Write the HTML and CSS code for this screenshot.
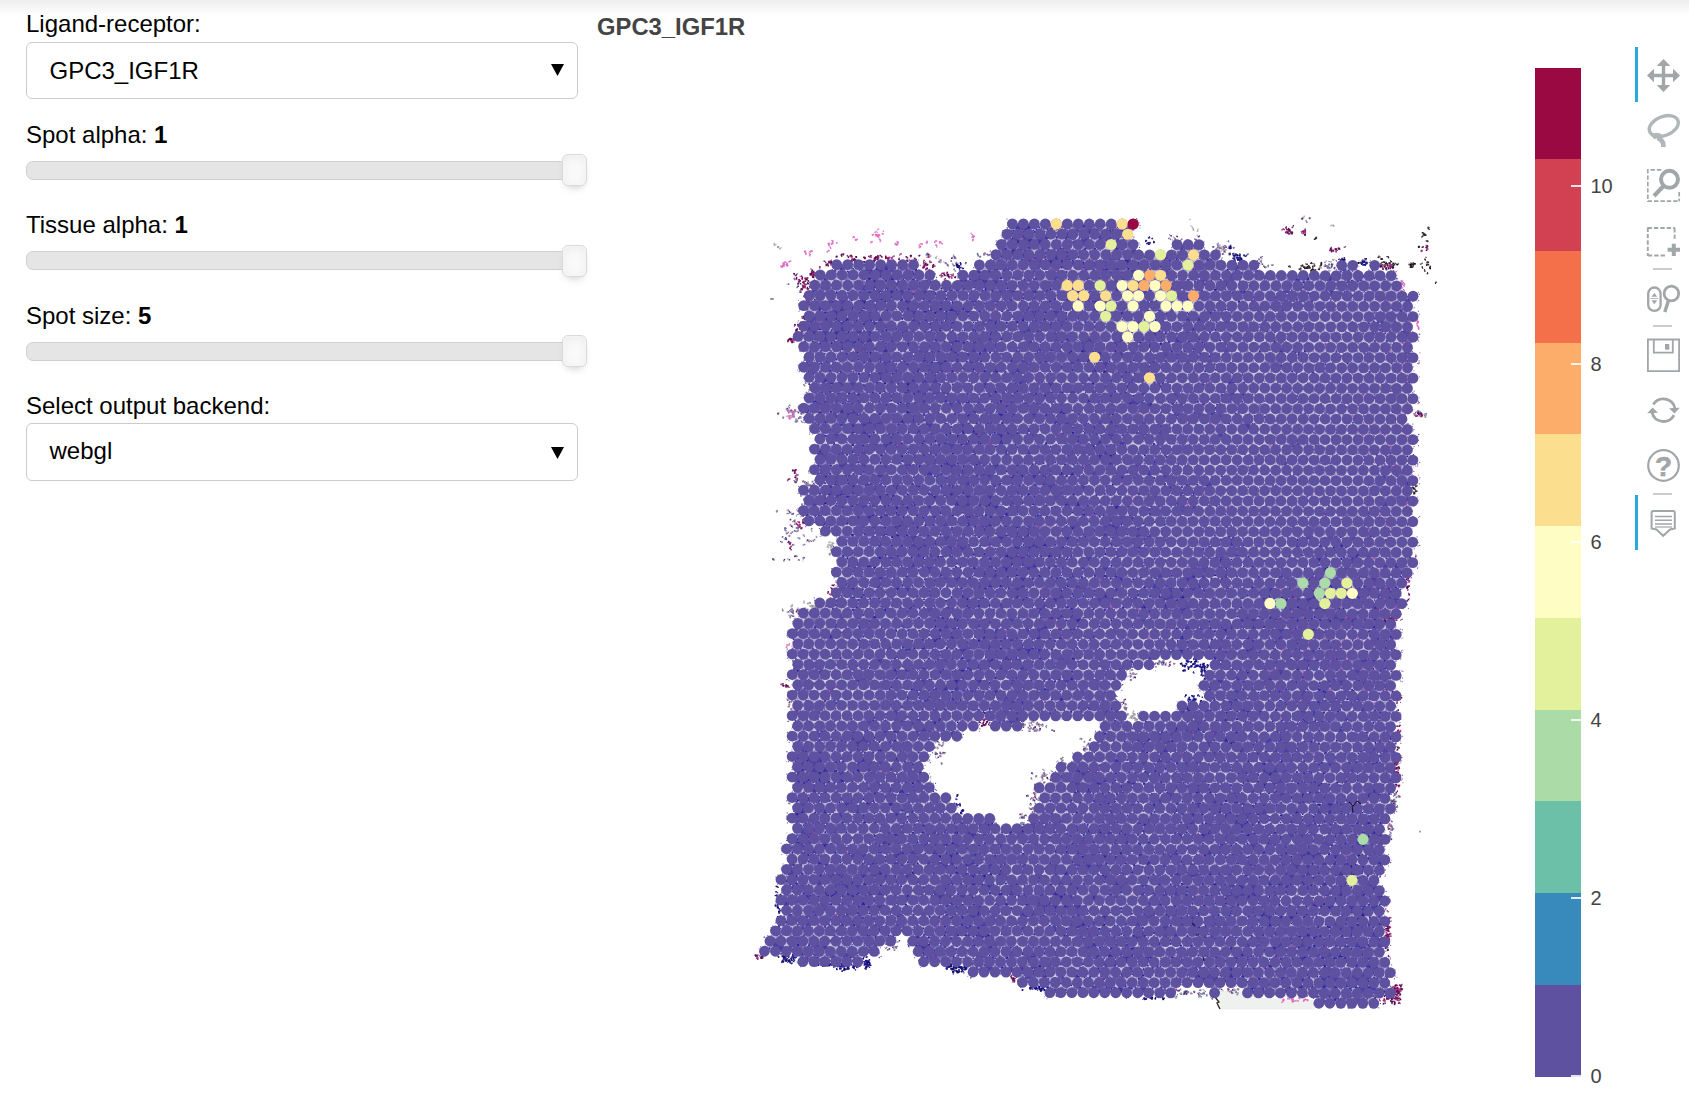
FILE: index.html
```html
<!DOCTYPE html>
<html lang="en">
<head>
<meta charset="utf-8">
<title>GPC3_IGF1R</title>
<link rel="stylesheet" href="styles.css">
</head>
<body>
<main class="app">
  <section class="controls">
    <div class="field">
      <div class="label">Ligand-receptor:</div>
      <div class="select" role="combobox"><span>GPC3_IGF1R</span><svg class="arrow" viewBox="0 0 13 12"><path d="M0 0H13L6.5 12Z"/></svg></div>
    </div>
    <div class="slider">
      <div class="label">Spot alpha: <b>1</b></div>
      <div class="track"><div class="handle"></div></div>
    </div>
    <div class="slider">
      <div class="label">Tissue alpha: <b>1</b></div>
      <div class="track"><div class="handle"></div></div>
    </div>
    <div class="slider">
      <div class="label">Spot size: <b>5</b></div>
      <div class="track"><div class="handle"></div></div>
    </div>
    <div class="field backend">
      <div class="label">Select output backend:</div>
      <div class="select" role="combobox"><span>webgl</span><svg class="arrow" viewBox="0 0 13 12"><path d="M0 0H13L6.5 12Z"/></svg></div>
    </div>
  </section>

  <section class="figure">
    <h1 class="title">GPC3_IGF1R</h1>
    <canvas id="plot" class="plot" width="720" height="830"></canvas>
  </section>

  <section class="colorbar">
    <div class="ramp">
      <i class="c10"></i><i class="c9"></i><i class="c8"></i><i class="c7"></i><i class="c6"></i><i class="c5"></i><i class="c4"></i><i class="c3"></i><i class="c2"></i><i class="c1"></i><i class="c0"></i>
    </div>
    <div class="ticks">
      <span>10</span><span>8</span><span>6</span><span>4</span><span>2</span><span>0</span>
    </div>
  </section>

  <nav class="toolbar">
    <div class="tool active"><svg viewBox="0 0 33 33"><path class="fill" d="M16.5 0L23.3 7H18.2V14.8H26V9.7L33 16.5L26 23.3V18.2H18.2V26H23.3L16.5 33L9.7 26H14.8V18.2H7V23.3L0 16.5L7 9.7V14.8H14.8V7H9.7Z"/></svg></div>
    <div class="tool"><svg viewBox="0 0 33 33"><g class="soft"><ellipse cx="16.8" cy="12" rx="15.2" ry="9.4" transform="rotate(-22 16.8 12)" stroke-width="3.4"/><path d="M5.5 23.2Q10 19.6 15 23.8" stroke-width="5.5"/><path d="M10.5 24Q16.8 26 16.5 33" stroke-width="4.6"/></g></svg></div>
    <div class="tool"><svg viewBox="0 0 33 33"><path d="M.8 0V32.2H33" stroke-width="1.7" stroke-dasharray="4.4 2"/><path d="M3.5 .9H15M32.2 23V32" stroke-width="1.7" stroke-dasharray="4.4 2"/><circle cx="22.5" cy="10.3" r="8.5" stroke-width="4"/><path d="M17 16.5L7 27" stroke-width="4.2"/></svg></div>
    <div class="tool"><svg viewBox="0 0 33 33"><path d="M.8 2.5V31M.8 30.5H18M.5 3H28M27.6 3V15" stroke-width="1.9" stroke-dasharray="4.4 2"/><path d="M26.8 18.8V31M20.6 24.8H33" stroke-width="4"/></svg></div>
    <hr>
    <div class="tool"><svg viewBox="0 0 33 33"><rect x="1.2" y="5.5" width="12.4" height="23.4" rx="6.2" stroke-width="2.3"/><path class="fill" d="M7.4 11L10.3 14.8H4.5ZM7.4 22.2L10.3 18.2H4.5Z"/><path d="M3.5 16.5H11.3" stroke-width=".8"/><circle cx="24.4" cy="11.5" r="7.3" stroke-width="2.8"/><path d="M21.5 18.5L17.8 30" stroke-width="3.5"/></svg></div>
    <hr>
    <div class="tool"><svg viewBox="0 0 33 33"><path d="M.9 .5H32.1V32.2H.9ZM6.8 1V13.6H25.8V1" stroke-width="1.8"/><path class="fill" d="M18 5H22.3V10.7H18Z"/></svg></div>
    <div class="tool"><svg viewBox="0 0 33 33"><path d="M6.3 10.4A11.9 11.9 0 0 1 28 14.5M27 21.2A11.9 11.9 0 0 1 5 18.5" stroke-width="2.8"/><path class="fill" d="M32.8 13.7L27.5 19.5L22 14.3ZM.2 19.3L5.5 13.5L11 18.7Z"/></svg></div>
    <div class="tool"><svg viewBox="0 0 33 33"><circle cx="16.5" cy="16.5" r="15.3" stroke-width="2.2"/><text x="16.5" y="26.5" text-anchor="middle">?</text></svg></div>
    <hr>
    <div class="tool active"><svg viewBox="0 0 33 33"><path d="M6.2 4H26Q27.8 4 27.8 6V21.5L23 22.5L16.2 28.8L9.5 22.5L4.6 21.5V6Q4.6 4 6.2 4Z" stroke-width="2"/><path d="M8 9.5H25M8 13.3H25M8 17H25" stroke-width="1.5"/><path d="M8 20H25" stroke-width="1.2"/></svg></div>
  </nav>
</main>
<script src="plot.js"></script>
</body>
</html>
```
FILE: styles.css
```css
* { box-sizing: border-box; }
body {
  margin: 0;
  background: #fff linear-gradient(#ededed, #fff) 0 0 / 100% 15px no-repeat;
  font-family: "Liberation Sans", Helvetica, Arial, sans-serif;
  font-size: 24px;
  line-height: 28px;
  color: #000;
}
.app { display: flex; height: 1106px; overflow: hidden; }

.controls { width: 597px; padding: 10px 0 0 26px; flex: none; }
.label { height: 28px; white-space: nowrap; }
.select {
  margin-top: 4px;
  width: 552px;
  height: 57px;
  border: 1.5px solid #ccc;
  border-radius: 6px;
  padding: 0 13.5px 0 22.5px;
  display: flex;
  align-items: center;
  justify-content: space-between;
  background: #fff;
}
.arrow { width: 13px; height: 12px; margin-top: -2px; }
.slider { height: 90.4px; position: relative; top: .6px; }
.field { height: 110.4px; }
.track {
  margin-top: 12px;
  width: 551px;
  height: 19px;
  border: 1.5px solid #d0d0d0;
  border-radius: 7px;
  background: #e5e5e5;
  display: flex;
  align-items: center;
  justify-content: flex-end;
}
.handle {
  flex: none;
  width: 25px;
  height: 32px;
  margin-right: -11px;
  border: 1.5px solid #d9d9d9;
  border-radius: 6px;
  background: #fafafa;
  box-shadow: inset 0 0 2px #fff, inset 0 2px 12px #ebebeb, 0 5px 10px -5px #bbb;
}
.backend .select { margin-top: 3px; height: 58.5px; padding-bottom: 1px; }
.backend .arrow { margin-top: 3px; }

.figure { width: 938px; flex: none; }
.title {
  margin: 13px 0 0;
  height: 28px;
  font-size: 23.8px;
  line-height: 28px;
  color: #444;
}
.plot { display: block; margin: 159px 0 0 143px; }

.colorbar { width: 100px; padding-top: 67.5px; flex: none; display: flex; }
.ramp { width: 46px; height: 1009px; display: flex; flex-direction: column; }
.ramp i { flex: 1; }
.c0 { background: #5e519f; }
.c1 { background: #3889bc; }
.c2 { background: #6cc0a7; }
.c3 { background: #abdba6; }
.c4 { background: #e4f19c; }
.c5 { background: #fefec4; }
.c6 { background: #fcde8f; }
.c7 { background: #fbad69; }
.c8 { background: #f3704b; }
.c9 { background: #d24151; }
.c10 { background: #9b0942; }
.ticks {
  margin: 107px 0 0 -10px;
  display: flex;
  flex-direction: column;
  font-size: 20px;
  line-height: 22px;
  color: #444;
}
.ticks span { flex: none; height: 178.1px; display: flex; align-items: flex-start; gap: 9.5px; }
.ticks span:last-child { height: 22px; }
.ticks span::before { content: ""; width: 10px; height: 2px; margin-top: 10px; background: #fff; opacity: .85; }

.toolbar { width: 54px; padding-top: 47px; flex: none; }
.tool { height: 55.2px; padding: 2px 0 0 9px; border-left: 3px solid transparent; display: flex; align-items: center; }
.tool.active { border-left-color: #26aae1; }
.tool svg { width: 33px; height: 33px; fill: none; stroke: #a1a6a9; display: block; overflow: visible; }
.tool .fill { fill: #a1a6a9; stroke: none; }
.tool .soft { stroke: #b1b7b9; }
.tool text { fill: #a1a6a9; stroke: #a1a6a9; stroke-width: .6; font-weight: bold; font-size: 28px; }
.toolbar hr { width: 19px; height: 2px; margin: 0 0 0 18px; border: 0; background: #ccc; }
```
FILE: plot.js
```js
// Spatial spot plot: a hexagonal lattice of spots over a stained tissue section.
const ctx = document.getElementById('plot').getContext('2d');
ctx.translate(-740, -200);

let seed = 7;
const rnd = () => {
  seed = (seed * 1664525 + 1013904223) >>> 0;
  return seed / 4294967296;
};
const pick = a => a[Math.floor(rnd() * a.length)];
const gauss = () => rnd() + rnd() + rnd() - 1.5;

const spotX = (r, c) => 1012.4 + 10.98 * (c + (r % 2 ? 0.5 : 0)) - 0.013 * r;
const spotY = (r, x) => 223.9 + 10.25 * r + 0.0014 * (x - 1040);

// Row by row: [first x, last x] of each run of spots.
const rows = [
  [[1012,1133]], [[1006,1128]], [[1001,1133],[1177,1199]], [[996,1216]],
  [[837,915],[979,1254],[1342,1353],[1375,1375]], [[820,930],[964,1391]],
  [[815,1397]], [[809,1413]], [[803,1408]], [[809,1413]], [[803,1408]], [[798,1413]],
  [[803,1408]], [[809,1413]], [[803,1408]], [[809,1413]], [[815,1408]], [[809,1413]],
  [[803,1408]], [[809,1402]], [[815,1408]], [[820,1413]], [[815,1408]], [[820,1413]],
  [[815,1408]], [[820,1413]], [[803,1408]], [[809,1413]], [[803,1408]], [[809,1413]],
  [[825,1408]], [[842,1413]], [[836,1407]], [[842,1413]], [[836,1407]], [[842,1402]],
  [[836,1396]], [[820,1402]], [[803,1396]], [[798,1391]], [[792,1396]], [[798,1391]],
  [[792,1396]], [[798,1150],[1212,1391]], [[792,1122],[1209,1396]],
  [[798,1117],[1204,1391]], [[792,1112],[1209,1396]], [[798,1117],[1181,1391]],
  [[792,1123],[1143,1396]], [[798,973],[995,1018],[1105,1391]], [[792,957],[1099,1396]],
  [[798,930],[1094,1391]], [[792,924],[1077,1396]], [[798,919],[1061,1391]],
  [[792,924],[1055,1396]], [[798,930],[1039,1390]], [[792,946],[1044,1385]],
  [[798,952],[1039,1390]], [[792,990],[1034,1385]], [[798,1379]], [[792,1385]],
  [[786,1379]], [[792,1385]], [[786,1379]], [[781,1374]], [[786,1379]], [[781,1385]],
  [[786,1379]], [[781,1385]], [[775,1379]], [[770,891],[912,1385]],
  [[764,874],[918,1379]], [[803,858],[923,1385]], [[972,1390]], [[1022,1385]],
  [[1050,1171],[1214,1214],[1247,1390]], [[1318,1374]]
];
const spots = [], have = new Set();
rows.forEach((runs, r) => {
  for (let c = -25; c < 40; c++) {
    const x = spotX(r, c);
    if (runs.some(([a, b]) => x > a - 3.6 && x < b + 3.6)) {
      spots.push({ r, c, x, y: spotY(r, x) });
      have.add(r + ',' + c);
    }
  }
});

const bump = (x, y, cx, cy, sx, sy) => Math.exp(-(((x - cx) / sx) ** 2) - ((y - cy) / sy) ** 2);
// Irregular patches in the stain
const blotch = (x, y) => 0.13 * (Math.sin(x / 17 + 2 * Math.sin(y / 23)) + Math.sin(y / 13 + 2 * Math.sin(x / 31)));
// How dark (nuclei-rich) and how pink the tissue is at a point, 0..1.
const dark = (x, y) => Math.max(0, Math.min(1,
  0.6 + blotch(x, y) + 0.3 * bump(x, y, 880, 330, 110, 120) + 0.25 * bump(x, y, 980, 560, 130, 180)
  + 1.2 * bump(x, y, 808, 768, 26, 20) + 0.35 * bump(x, y, 1290, 880, 100, 110)
  + 0.3 * bump(x, y, 1360, 930, 40, 90) + 0.22 * bump(x, y, 900, 900, 130, 100)
  + 0.4 * bump(x, y, 1330, 610, 90, 65) + 0.3 * bump(x, y, 1080, 240, 90, 40)
  - 0.6 * bump(x, y, 1340, 400, 130, 160) - 0.5 * bump(x, y, 830, 660, 60, 90)
  - 0.3 * bump(x, y, 1100, 650, 60, 50) - 0.35 * bump(x, y, 1240, 500, 130, 70)));
const pink = (x, y) => 0.1 + 0.7 * bump(x, y, 1310, 635, 75, 50) + 0.35 * bump(x, y, 1080, 270, 100, 60)
  + 0.3 * bump(x, y, 1390, 480, 40, 220);

const DARK = ['#2a1fa8', '#3a2fa6', '#3f2fa0', '#2a1c90', '#2420b0', '#4d409f'];
const LIGHT = ['#c9c8dc', '#b9b6d4', '#cfcddf', '#aaa5cd', '#b4b6da'];
const MID = ['#7367b0', '#665aa8', '#8076ba', '#594ca0', '#4a3fa2'];
const PINK = ['#a2479f', '#b070b8', '#8a3aa0', '#b35aa8'];
const dot = (x, y, s, col) => { ctx.fillStyle = col; ctx.fillRect(x, y, s, s); };

function gap(a, b, c) {
  const mx = (a[0] + b[0] + c[0]) / 3, my = (a[1] + b[1] + c[1]) / 3;
  const d = dark(mx, my);
  ctx.fillStyle = ctx.strokeStyle = rnd() < d * 0.85 ? pick(MID) : pick(LIGHT);
  ctx.beginPath(); ctx.moveTo(...a); ctx.lineTo(...b); ctx.lineTo(...c); ctx.closePath();
  ctx.fill(); ctx.lineWidth = 0.5; ctx.stroke();
  for (let i = 0; i < 9; i++) {
    const u = rnd();
    const col = u < pink(mx, my) * 0.5 ? pick(PINK) : rnd() < d * 0.7 ? pick(DARK) : pick(rnd() < 0.5 ? MID : LIGHT);
    dot(mx + gauss() * 5, my + gauss() * 5, 1 + rnd() * 1.1, col);
  }
}
for (const s of spots) {
  const o = s.r % 2;
  const p = (r, c) => { const x = spotX(r, c); return [x, spotY(r, x)]; };
  const has = (r, c) => have.has(r + ',' + c);
  const R = has(s.r, s.c + 1);
  if (R && has(s.r + 1, s.c + o)) gap(p(s.r, s.c), p(s.r, s.c + 1), p(s.r + 1, s.c + o));
  if (R && has(s.r - 1, s.c + o)) gap(p(s.r, s.c), p(s.r, s.c + 1), p(s.r - 1, s.c + o));
  // ragged fringe of tissue outside the outer spots
  const left = !has(s.r, s.c - 1), right = !R;
  if (left || right) {
    for (let i = 0; i < 7; i++) {
      dot(s.x + (left ? -1 : 1) * (2 + rnd() * 4.5), s.y + (rnd() - 0.5) * 12, 1,
        pick(s.x > 1300 ? ['#b06bb0', '#8b2a86', '#d0a8cf', '#5a45a0'] : ['#3a3a80', '#8f95b5', '#5d4a9c', '#a860a8']));
    }
  }
}

// Strip of glass beside the lower edge, and a fold next to it
ctx.fillStyle = '#eef1ed';
ctx.beginPath();
ctx.moveTo(1217, 991); ctx.lineTo(1240, 991); ctx.lineTo(1262, 998); ctx.lineTo(1313, 1000);
ctx.lineTo(1315, 1009.5); ctx.lineTo(1220, 1009.5); ctx.fill();
ctx.strokeStyle = '#27251c'; ctx.lineWidth = 1.3;
ctx.beginPath(); ctx.moveTo(1215, 997); ctx.lineTo(1219, 1002); ctx.lineTo(1217, 1003); ctx.lineTo(1220, 1009); ctx.stroke();

// Loose fragments: x, y, half-width, half-height, count, palette
const K = ['#222', '#3b2036', '#111', '#4a3040'], M = ['#8c1464', '#5c1050', '#b03a8c', '#3d0d4a'];
const P = ['#e070c8', '#d88cc8', '#e45cb8'], G = ['#a8a8a8', '#c4b8c4', '#8f8890'];
const B = ['#14107a', '#2a1fa0', '#0c0a50'], X = ['#8a7a9c', '#a86a9c', '#6a7aa8', '#b8b0c0', '#4a3070'];
[
  [785,263,5,4,30,P],[809,252,4,3,16,P],[828,246,5,5,12,P],[833,241,3,2,10,P],[854,240,2,3,8,P],
  [875,236,6,8,34,P],[896,244,4,2,8,P],[919,245,3,3,8,P],[936,243,10,4,14,P],[972,237,3,5,12,P],
  [775,248,5,7,12,G],[771,296,2,5,4,G],[797,283,9,8,20,X],[799,277,6,10,24,M],[805,285,6,10,60,M],
  [813,273,5,5,40,M],[804,305,4,16,30,M],[828,262,3,3,24,M],[876,258,44,4,150,M],[925,266,9,5,45,M],
  [946,263,18,11,55,X],[947,275,12,3,40,M],[960,267,4,5,26,B],[985,256,8,8,24,X],[790,339,4,3,32,M],
  [798,329,4,7,36,M],[808,385,5,14,30,X],[792,414,11,8,80,X],[789,414,7,4,20,P],[794,473,4,5,24,M],
  [805,483,10,5,50,X],[788,513,14,9,34,X],[800,524,6,4,34,M],[795,534,22,14,80,X],[787,544,4,3,14,M],
  [790,558,14,3,22,X],[829,548,5,8,40,G],[831,590,5,5,20,M],[791,610,8,8,48,X],[812,607,10,5,44,G],
  [789,647,4,6,14,P],[787,684,5,2,18,M],[789,702,3,7,22,X],[758,956,4,4,28,M],[778,905,3,26,80,B],
  [788,958,12,4,80,B],[820,963,10,3,60,B],[850,966,18,4,100,B],[866,961,3,6,60,B],[890,943,12,7,40,X],
  [957,968,12,4,120,B],[1013,979,4,4,26,M],[1037,987,14,4,100,B],[938,747,10,14,70,X],
  [1022,818,5,6,34,X],[1033,800,6,14,60,X],[1043,776,10,9,50,X],[1060,764,6,7,24,X],[1086,745,8,8,40,X],
  [1035,725,16,5,80,X],[983,723,6,4,30,M],[958,807,6,8,40,B],[1165,663,12,3,40,X],[1194,664,14,6,110,B],
  [1203,672,5,7,30,B],[1192,699,6,4,44,B],[1204,698,4,6,16,B],[1130,675,6,6,30,X],[1133,716,6,5,40,G],
  [1123,703,3,7,20,X],[1150,241,6,5,20,B],[1180,238,22,3,26,X],[1190,225,12,10,10,G],[1220,248,9,6,90,X],
  [1230,249,1,5,10,B],[1238,257,8,4,70,B],[1262,263,12,6,34,X],[1288,230,6,4,36,M],[1304,232,3,3,20,M],
  [1305,219,6,4,12,X],[1315,237,1,1,5,K],[1331,221,2,6,5,G],[1337,248,8,3,32,M],[1308,266,16,5,60,K],
  [1328,265,8,5,50,X],[1342,259,4,2,16,B],[1362,262,6,4,40,B],[1384,262,10,6,60,K],[1386,266,6,3,40,M],
  [1411,264,3,3,22,K],[1425,234,4,8,22,K],[1425,248,3,3,14,M],[1422,268,14,20,34,K],[1402,285,5,5,30,P],
  [1419,413,6,3,40,X],[1418,413,4,2,16,M],[1417,325,2,20,14,P],[1414,488,2,7,24,K],[1414,562,3,8,18,M],
  [1408,584,3,14,40,M],[1390,618,6,4,34,M],[1398,720,2,30,40,M],[1397,770,3,24,80,M],[1393,800,3,12,60,X],
  [1389,828,4,12,70,X],[1387,930,2,24,110,M],[1396,990,5,7,130,M],[1388,999,12,4,70,M],[1196,992,20,3,90,X],
  [1232,990,10,3,30,X],[1292,999,22,2,40,P],[1140,998,20,1,30,B],[1419,831,1,1,1,G]
].forEach(([x, y, w, h, n, pal]) => {
  let px = x, py = y;
  for (let i = 0; i < n; i++) {
    // fragments come in short chains that start at a fresh point
    if (i % 3 === 0) { px = x + gauss() * w; py = y + gauss() * h; }
    else { px += (rnd() - 0.5) * 2.6; py += (rnd() - 0.5) * 2.6; }
    dot(px, py, 1 + rnd() * 0.7, pick(pal));
  }
});

// The spots themselves; all at the lowest level unless listed here
const L = { g: '#abdba6', l: '#e4f19c', c: '#fefec4', y: '#fcde8f', o: '#fbad69', r: '#9b0942' };
const levels = [
  [0,1056.7,'y'],[0,1122.3,'y'],[0,1133,'r'],[1,1128,'y'],[2,1111.7,'l'],[3,1161,'l'],[3,1193.7,'y'],
  [4,1188.3,'l'],[5,1139,'c'],[5,1150,'o'],[5,1161,'y'],[6,1067.3,'y'],[6,1078.3,'y'],[6,1100.7,'l'],
  [6,1122.3,'c'],[6,1133.3,'y'],[6,1144.3,'o'],[6,1155.3,'c'],[6,1166.3,'o'],[7,1073,'y'],[7,1083.7,'y'],
  [7,1106,'y'],[7,1128,'c'],[7,1139,'c'],[7,1161,'c'],[7,1172,'l'],[7,1193.7,'o'],[8,1078.3,'c'],
  [8,1100.7,'c'],[8,1111.3,'l'],[8,1133.3,'c'],[8,1166.3,'c'],[8,1177.3,'c'],[8,1188.3,'c'],[9,1106,'l'],
  [9,1150,'c'],[10,1122.3,'c'],[10,1133.3,'c'],[10,1144.3,'l'],[10,1155.3,'c'],[11,1128,'c'],
  [13,1095,'y'],[15,1150,'y'],[34,1330.3,'g'],[35,1302.7,'g'],[35,1325,'g'],[35,1346.7,'l'],
  [36,1319.3,'g'],[36,1330.3,'l'],[36,1341.3,'l'],[36,1352.3,'c'],[37,1270,'c'],[37,1281,'g'],
  [37,1325,'l'],[40,1308.3,'l'],[60,1362.7,'g'],[64,1352,'l']
];
const disc = (s, radius, col) => {
  ctx.fillStyle = col;
  ctx.beginPath();
  ctx.arc(s.x, s.y, radius, 0, Math.PI * 2);
  ctx.fill();
};
const levelOf = s => levels.find(([r, x]) => r === s.r && Math.abs(x - s.x) < 4);
for (const s of spots) disc(s, 5.4, '#5e519f');
for (const s of spots) {
  const hit = levelOf(s);
  if (hit) disc(s, 5.6, L[hit[2]]);
}

// Dark creases showing between spots
ctx.strokeStyle = '#1c1440';
ctx.lineWidth = 1.2;
[[[1349,802],[1353,806],[1357,801],[1361,804]],[[1352,806],[1353,812]],[[1192,923],[1195,926]],
 [[1196,935],[1199,935]],[[1203,957],[1204,961]]].forEach(l => {
  ctx.beginPath(); l.forEach((p, i) => i ? ctx.lineTo(...p) : ctx.moveTo(...p)); ctx.stroke();
});
```
